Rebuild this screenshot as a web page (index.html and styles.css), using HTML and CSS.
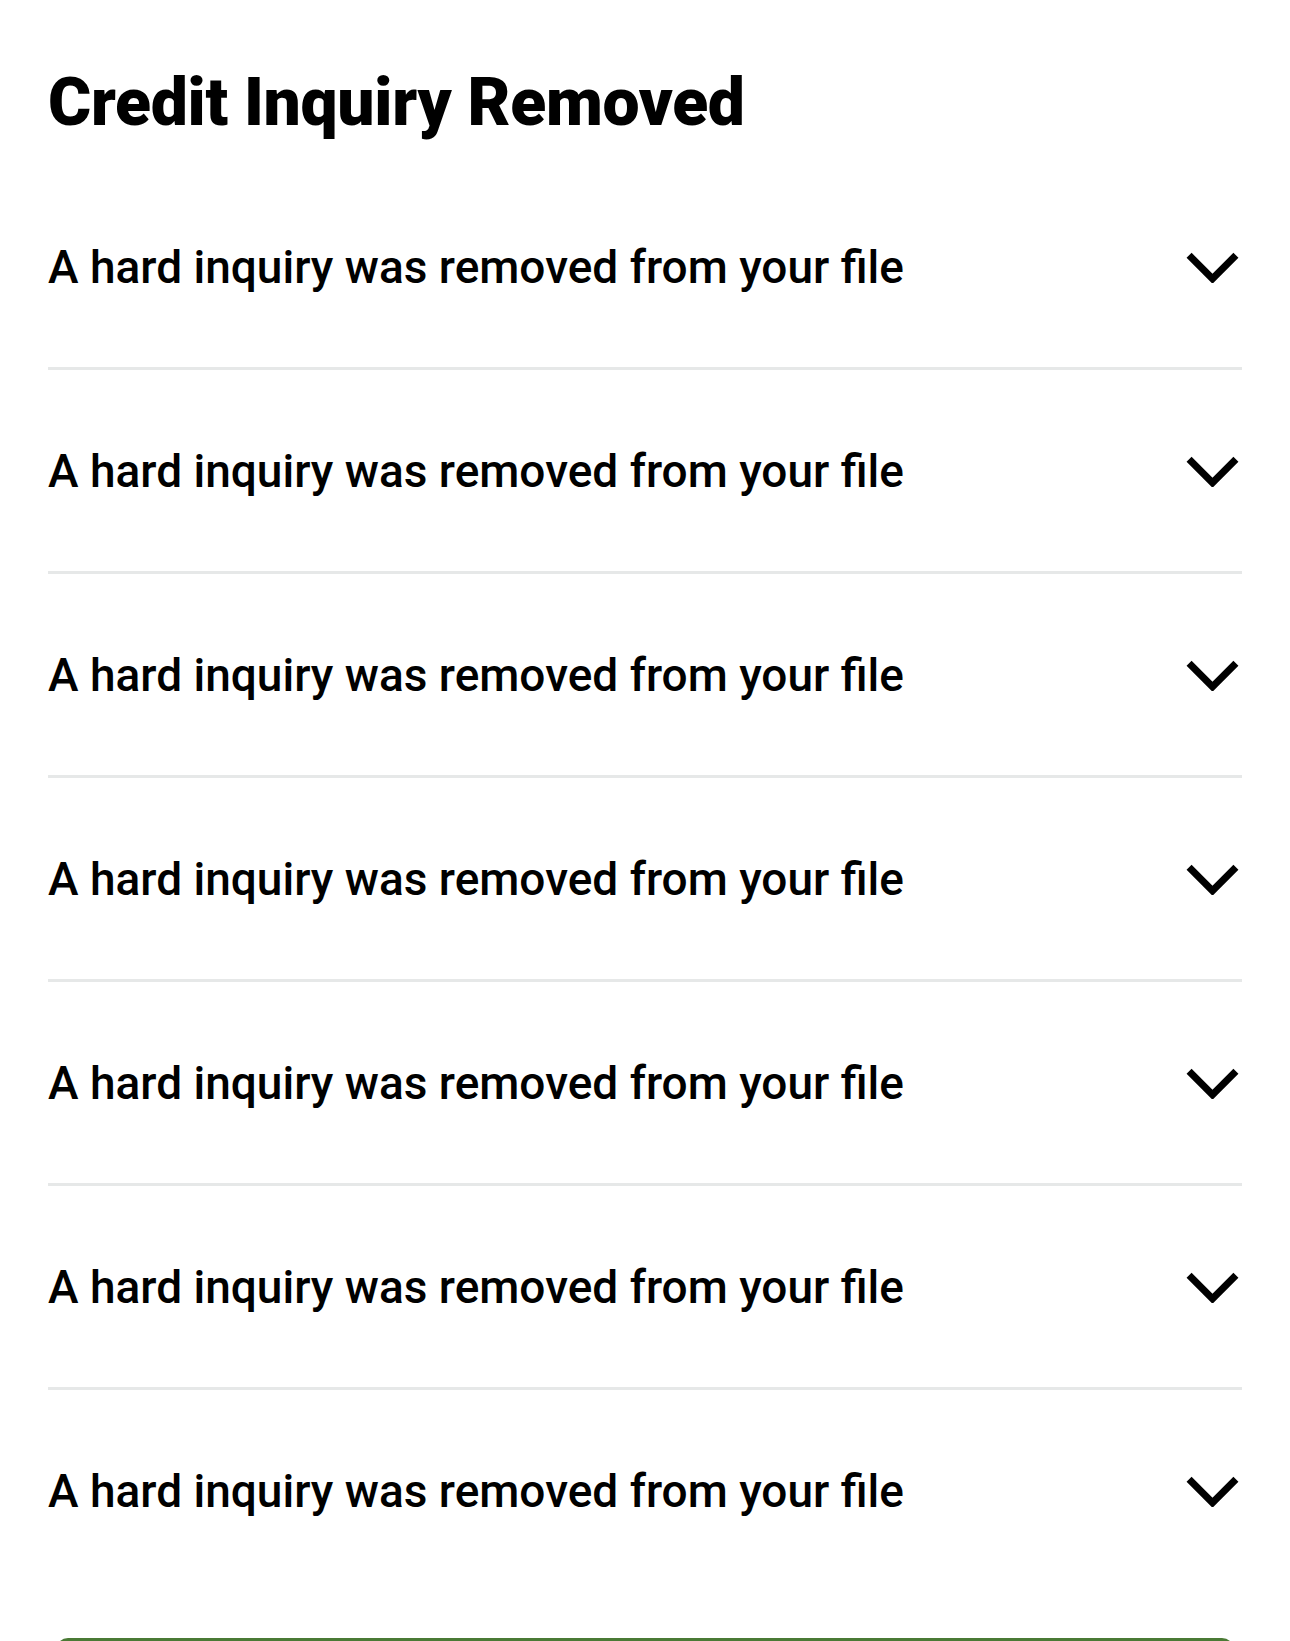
FILE: index.html
```html
<!DOCTYPE html>
<html lang="en">
<head>
<meta charset="utf-8">
<title>Credit Inquiry Removed</title>
<link rel="stylesheet" href="styles.css">
</head>
<body>
<main class="page">
  <h1 class="title">Credit Inquiry Removed</h1>
  <ul class="list">
    <li class="row"><span class="row-text">A hard inquiry was removed from your file</span><svg class="chev" viewBox="0 0 54 32" aria-hidden="true"><polyline points="4,5 27,28 50,5"/></svg></li>
    <li class="row"><span class="row-text">A hard inquiry was removed from your file</span><svg class="chev" viewBox="0 0 54 32" aria-hidden="true"><polyline points="4,5 27,28 50,5"/></svg></li>
    <li class="row"><span class="row-text">A hard inquiry was removed from your file</span><svg class="chev" viewBox="0 0 54 32" aria-hidden="true"><polyline points="4,5 27,28 50,5"/></svg></li>
    <li class="row"><span class="row-text">A hard inquiry was removed from your file</span><svg class="chev" viewBox="0 0 54 32" aria-hidden="true"><polyline points="4,5 27,28 50,5"/></svg></li>
    <li class="row"><span class="row-text">A hard inquiry was removed from your file</span><svg class="chev" viewBox="0 0 54 32" aria-hidden="true"><polyline points="4,5 27,28 50,5"/></svg></li>
    <li class="row"><span class="row-text">A hard inquiry was removed from your file</span><svg class="chev" viewBox="0 0 54 32" aria-hidden="true"><polyline points="4,5 27,28 50,5"/></svg></li>
    <li class="row"><span class="row-text">A hard inquiry was removed from your file</span><svg class="chev" viewBox="0 0 54 32" aria-hidden="true"><polyline points="4,5 27,28 50,5"/></svg></li>
  </ul>
  <div class="cta"></div>
</main>
</body>
</html>
```

FILE: styles.css
```css
html, body {
  margin: 0;
  padding: 0;
  background: #ffffff;
}
.page {
  padding: 0 48px 0 48px;
  font-family: Roboto, "Liberation Sans", sans-serif;
  color: #000;
  height: 1641px;
  overflow: hidden;
  box-sizing: border-box;
}
.title {
  margin: 0;
  padding-top: 70px;
  font-size: 66px;
  line-height: 66px;
  font-weight: 900;
  letter-spacing: -0.3px;
  height: 96px;
}
.list {
  list-style: none;
  margin: 0;
  padding: 0;
}
.row {
  display: flex;
  align-items: center;
  justify-content: space-between;
  height: 201px;
  border-bottom: 3px solid #e6e8e8;
}
.row:last-child {
  border-bottom: none;
}
.row-text {
  font-size: 46px;
  font-weight: 500;
  letter-spacing: 0;
}
.chev {
  width: 55px;
  height: 33px;
  margin-right: 2px;
  fill: none;
  stroke: #000;
  stroke-width: 7;
  stroke-linecap: butt;
  stroke-linejoin: miter;
}
.cta {
  margin: 47px 8px 0 8px;
  height: 60px;
  border-radius: 12px;
  background: #4a7a35;
}
```
